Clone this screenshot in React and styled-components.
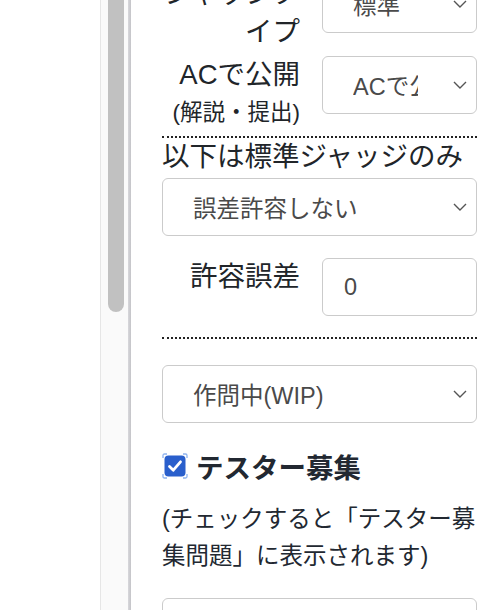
import React from "react";
import styled, { createGlobalStyle } from "styled-components";

const GlobalStyle = createGlobalStyle`
    html, body {
        margin: 0;
        padding: 0;
        background: #fff;
    }
    body {
        font-family: "Liberation Sans", "Noto Sans CJK JP", sans-serif;
        color: #212529;
        overflow: hidden;
    }
`;

const Page = styled.div`
    display: flex;
    height: 610px;
    overflow: hidden;
`;

const Blank = styled.div`
    width: 100px;
    flex-shrink: 0;
`;

const ScrollTrack = styled.div`
    width: 28px;
    flex-shrink: 0;
    background: #fafafa;
    border-left: 1px solid #e6e6e6;
    padding: 0 5px 0 7px;
    box-sizing: border-box;
`;

const Thumb = styled.div`
    height: 312px;
    width: 16px;
    background: #c1c1c1;
    border-radius: 0 0 8px 8px;
`;

const Divider = styled.div`
    width: 3px;
    flex-shrink: 0;
    background: linear-gradient(to right, #d8d8dc, #c4c4c8);
`;

const Panel = styled.div`
    flex: 1;
    padding: 0 7px 0 31px;
    margin-top: -25px;
    min-width: 0;
`;

const FieldRow = styled.div`
    display: flex;
    align-items: flex-start;
    gap: 22px;
    margin-top: ${p => p.$top || 0}px;
`;

const Label = styled.div`
    width: 138px;
    flex-shrink: 0;
    text-align: right;
    font-size: 27.5px;
    line-height: 38px;
`;

const Note = styled.span`
    display: block;
    font-size: 22.5px;
    line-height: 38px;
    white-space: nowrap;
`;

const SelectBox = styled.div`
    flex: 1;
    min-width: 0;
    height: 58px;
    box-sizing: border-box;
    border: 1px solid #cbcbcb;
    border-radius: 6px;
    display: flex;
    align-items: center;
    gap: 35px;
    padding: 0 9px 0 30px;
    margin-top: ${p => p.$top || 0}px;
    background: #fff;
`;

const SelectText = styled.span`
    flex: 1;
    overflow: hidden;
    white-space: nowrap;
    font-size: 23.5px;
    color: #4a4a4a;
`;

const TextInput = styled.div`
    flex: 1;
    height: 58px;
    box-sizing: border-box;
    border: 1px solid #cbcbcb;
    border-radius: 6px;
    display: flex;
    align-items: center;
    padding-left: 21px;
    font-size: 23.5px;
    color: #4a4a4a;
`;

const Dotted = styled.div`
    border-top: 2px dotted #222;
    margin-top: ${p => p.$top}px;
`;

const Heading = styled.div`
    font-size: 27.5px;
    line-height: 38px;
    white-space: nowrap;
`;

const CheckRow = styled.label`
    display: flex;
    align-items: center;
    gap: 8px;
    height: 38px;
    margin-top: 24px;
    font-size: 27.5px;
    font-weight: bold;
    color: #222831;
`;

const Hint = styled.p`
    margin: 16px 0 0;
    font-size: 23.5px;
    line-height: 37px;
    color: #222831;
`;

const Chevron = () => (
    <svg width="14" height="8" viewBox="0 0 14 8" style={{ flexShrink: 0 }}>
        <polyline
            points="1,1 7,7 13,1"
            fill="none"
            stroke="#555"
            strokeWidth="1.4"
        />
    </svg>
);

const CheckMark = () => (
    <svg width="26" height="26" viewBox="0 0 26 26" style={{ flexShrink: 0 }}>
        <path
            d="M1 5V2.5Q1 1 2.5 1H5M21 1h2.5Q25 1 25 2.5V5M25 21v2.5Q25 25 23.5 25H21M5 25H2.5Q1 25 1 23.5V21"
            fill="none"
            stroke="#8fb3ee"
            strokeWidth="1.3"
        />
        <rect x="2.5" y="2.5" width="21" height="21" rx="4" fill="#2a5fcc" />
        <polyline
            points="7.5,13.5 11.3,17.2 18.5,8.8"
            fill="none"
            stroke="#fff"
            strokeWidth="2.8"
            strokeLinecap="round"
            strokeLinejoin="round"
        />
    </svg>
);

function Select({ value, top }) {
    return (
        <SelectBox $top={top}>
            <SelectText>{value}</SelectText>
            <Chevron />
        </SelectBox>
    );
}

export default function App() {
    return (
        <Page>
            <GlobalStyle />
            <Blank />
            <ScrollTrack>
                <Thumb />
            </ScrollTrack>
            <Divider />
            <Panel>
                <FieldRow>
                    <Label>ジャッジタイプ</Label>
                    <Select value="標準" />
                </FieldRow>
                <FieldRow $top={5}>
                    <Label>
                        ACで公開
                        <Note>(解説・提出)</Note>
                    </Label>
                    <Select value="ACで公開" />
                </FieldRow>
                <Dotted $top={4} />
                <Heading>以下は標準ジャッジのみ</Heading>
                <Select value="誤差許容しない" top={2} />
                <FieldRow $top={22}>
                    <Label>許容誤差</Label>
                    <TextInput>0</TextInput>
                </FieldRow>
                <Dotted $top={21} />
                <Select value="作問中(WIP)" top={26} />
                <CheckRow>
                    <CheckMark />
                    テスター募集
                </CheckRow>
                <Hint>(チェックすると「テスター募集問題」に表示されます)</Hint>
                <Select value="" top={23} />
            </Panel>
        </Page>
    );
}
